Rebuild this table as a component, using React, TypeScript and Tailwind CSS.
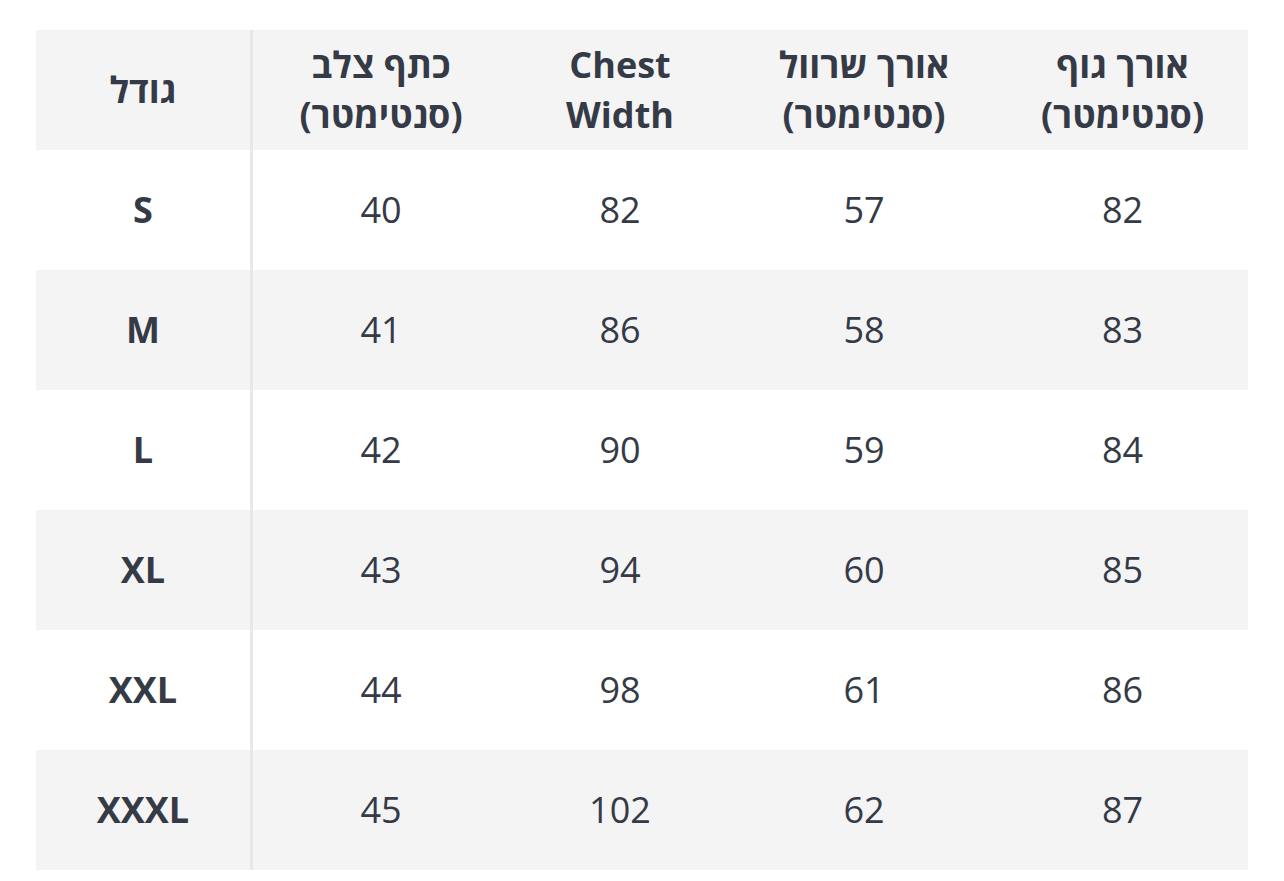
// Size chart — a simple striped table, first column separated by a thin rule.

type Row = {
  size: string;
  shoulder: number;
  chest: number;
  sleeve: number;
  body: number;
};

const rows: Row[] = [
  { size: "S", shoulder: 40, chest: 82, sleeve: 57, body: 82 },
  { size: "M", shoulder: 41, chest: 86, sleeve: 58, body: 83 },
  { size: "L", shoulder: 42, chest: 90, sleeve: 59, body: 84 },
  { size: "XL", shoulder: 43, chest: 94, sleeve: 60, body: 85 },
  { size: "XXL", shoulder: 44, chest: 98, sleeve: 61, body: 86 },
  { size: "XXXL", shoulder: 45, chest: 102, sleeve: 62, body: 87 },
];

const grid =
  "grid grid-cols-[217px_256px_222px_266px_251px] h-[120px] items-stretch";
const first =
  "flex items-center justify-center border-r-[3px] border-[#e8e8e8] font-bold";
const cell = "flex items-center justify-center";

export default function App() {
  return (
    <div
      className="min-h-[881px] bg-white px-[36px] pt-[30px] text-[#353a47]"
      style={{ fontFamily: '"Open Sans", "Noto Sans", "DejaVu Sans", sans-serif' }}
    >
      <div className="w-[1212px]">
        {/* header */}
        <div className={`${grid} bg-[#f4f4f4] text-[36px] font-bold leading-[50px]`}>
          <div className={first}>
            <span dir="rtl">גודל</span>
          </div>
          <div className={`${cell} text-center`} dir="rtl">
            <span>
              כתף צלב
              <br />
              (סנטימטר)
            </span>
          </div>
          <div className={`${cell} text-center`}>
            <span>
              Chest
              <br />
              Width
            </span>
          </div>
          <div className={`${cell} text-center`} dir="rtl">
            <span>
              אורך שרוול
              <br />
              (סנטימטר)
            </span>
          </div>
          <div className={`${cell} text-center`} dir="rtl">
            <span>
              אורך גוף
              <br />
              (סנטימטר)
            </span>
          </div>
        </div>

        {rows.map((r, i) => (
          <div
            key={r.size}
            className={`${grid} text-[36px] ${i % 2 === 1 ? "bg-[#f4f4f4]" : "bg-white"}`}
          >
            <div className={first}>{r.size}</div>
            <div className={cell}>{r.shoulder}</div>
            <div className={cell}>{r.chest}</div>
            <div className={cell}>{r.sleeve}</div>
            <div className={cell}>{r.body}</div>
          </div>
        ))}
      </div>
    </div>
  );
}
